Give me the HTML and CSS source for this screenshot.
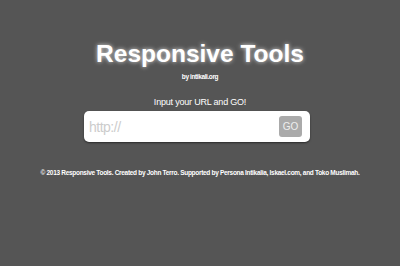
FILE: index.html
```html
<!DOCTYPE html>
<html lang="en">
<head>
    <meta charset="UTF-8">
    <title>Responsive Tools</title>
    <link rel="stylesheet" href="styles.css">
</head>
<body>
    <div class="wrap">
        <h1 class="title">Responsive Tools</h1>
        <p class="by">by intikali.org</p>
        <p class="hint">Input your URL and GO!</p>
        <form class="url_box">
            <input class="url_input" type="text" placeholder="http://">
            <button class="go_btn" type="button">GO</button>
        </form>
        <p class="foot">&copy; 2013 Responsive Tools. Created by John Terro. Supported by Persona Intikalia, Iskael.com, and Toko Muslimah.</p>
    </div>
</body>
</html>
```

FILE: styles.css
```css
* {
    margin: 0;
    padding: 0;
    border: 0;
    box-sizing: border-box;
}
html, body {
    height: 100%;
    width: 100%;
}
body {
    background-color: #555555;
    font-family: "Liberation Sans", Arial, sans-serif;
    color: #fff;
}
.wrap {
    display: flex;
    flex-direction: column;
    align-items: center;
    padding-top: 40px;
}
.title {
    font-size: 24.5px;
    line-height: 28px;
    font-weight: bold;
    text-shadow: 0 0 4px rgba(255, 255, 255, 0.8);
}
.by {
    font-size: 6.5px;
    font-weight: bold;
    letter-spacing: -0.4px;
    line-height: 10px;
    margin-top: 4px;
}
.hint {
    font-size: 9px;
    letter-spacing: -0.2px;
    line-height: 12px;
    margin-top: 14px;
}
.url_box {
    display: flex;
    align-items: center;
    width: 226px;
    height: 31px;
    margin-top: 3px;
    margin-right: 6px;
    padding: 0 8px 0 5px;
    background-color: #fff;
    border-radius: 5px;
    box-shadow: 0 1px 2px rgba(0, 0, 0, 0.5);
}
.url_input {
    flex: 1;
    min-width: 0;
    font-family: "Liberation Sans", Arial, sans-serif;
    font-size: 14px;
    letter-spacing: -0.5px;
    color: #333;
    background: transparent;
    outline: none;
}
.url_input::placeholder {
    color: #cccccc;
}
.go_btn {
    width: 23px;
    height: 21px;
    background-color: #aaaaaa;
    color: #eee;
    font-family: "Liberation Sans", Arial, sans-serif;
    font-size: 10px;
    border-radius: 3px;
}
.foot {
    font-size: 6.5px;
    font-weight: bold;
    letter-spacing: -0.3px;
    line-height: 10px;
    margin-top: 26px;
}
```
